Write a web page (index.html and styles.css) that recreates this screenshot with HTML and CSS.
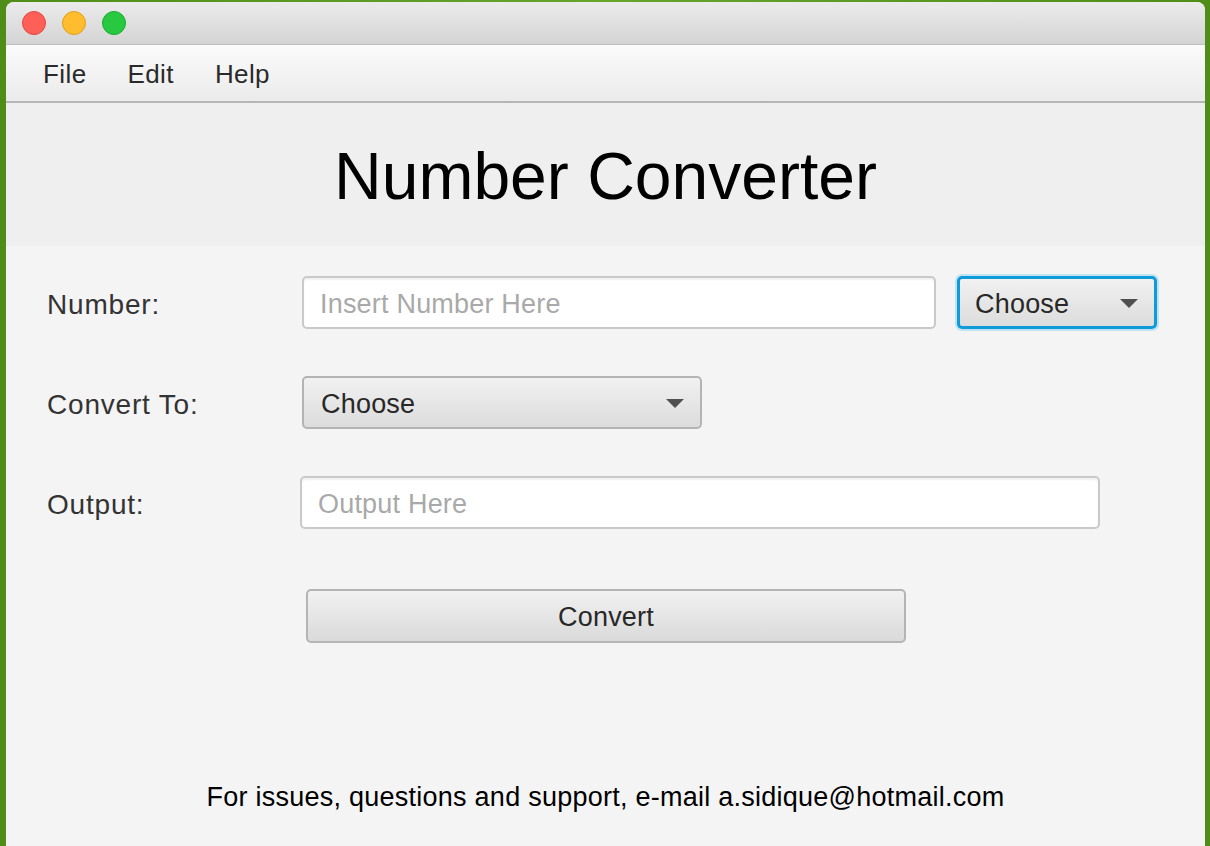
FILE: index.html
```html
<!DOCTYPE html>
<html>
<head>
<meta charset="utf-8">
<link rel="stylesheet" href="styles.css">
</head>
<body>
<div class="window">
  <div class="titlebar">
    <span class="light red"></span>
    <span class="light yellow"></span>
    <span class="light green"></span>
  </div>
  <div class="menubar">
    <span class="menu">File</span>
    <span class="menu">Edit</span>
    <span class="menu">Help</span>
  </div>
  <div class="header">
    <h1 class="title">Number Converter</h1>
  </div>
  <div class="content">
    <div class="row">
      <span class="label">Number:</span>
      <div class="field field-number"><span class="placeholder">Insert Number Here</span></div>
      <div class="combo combo-small focused"><span>Choose</span><span class="arrow"></span></div>
    </div>
    <div class="row">
      <span class="label">Convert To:</span>
      <div class="combo combo-wide"><span>Choose</span><span class="arrow"></span></div>
    </div>
    <div class="row">
      <span class="label">Output:</span>
      <div class="field field-output"><span class="placeholder">Output Here</span></div>
    </div>
    <div class="row row-button">
      <div class="button">Convert</div>
    </div>
    <div class="footer">For issues, questions and support, e-mail a.sidique@hotmail.com</div>
  </div>
</div>
</body>
</html>
```

FILE: styles.css
```css
html, body {
  margin: 0;
  padding: 0;
  height: 100%;
}
body {
  background: linear-gradient(90deg, #4f8d18 0%, #66a52a 50%, #4f8d18 100%);
  font-family: "Liberation Sans", Arial, sans-serif;
  overflow: hidden;
}
.window {
  margin: 2px 0 0 6px;
  width: 1199px;
  height: 844px;
  background: #f4f4f4;
  border-radius: 8px 8px 0 0;
  overflow: hidden;
  display: flex;
  flex-direction: column;
}
.titlebar {
  height: 43px;
  box-sizing: border-box;
  background: linear-gradient(#ebebeb, #d4d4d4);
  border-bottom: 1px solid #bdbdbd;
  display: flex;
  align-items: center;
  padding: 0 0 0 16px;
  gap: 16px;
}
.light {
  width: 24px;
  height: 24px;
  border-radius: 50%;
  box-sizing: border-box;
}
.red { background: #fe5f57; border: 1px solid #e2463f; }
.yellow { background: #febc2e; border: 1px solid #e1a116; }
.green { background: #28c840; border: 1px solid #14ae2a; }
.menubar {
  height: 58px;
  box-sizing: border-box;
  background: linear-gradient(#fbfbfb, #ebebeb);
  border-bottom: 2px solid #b6b6b6;
  display: flex;
  align-items: center;
  padding: 3px 0 0 37px;
  gap: 41px;
  font-size: 26px;
  letter-spacing: 0.4px;
  color: #2a2a2a;
}
.header {
  height: 143px;
  background: #efefef;
  display: flex;
  align-items: center;
  justify-content: center;
}
.title {
  margin: 3px 0 0 0;
  font-weight: normal;
  font-size: 66px;
  color: #000;
}
.content {
  flex: 1;
  display: flex;
  flex-direction: column;
  padding: 30px 0 0 41px;
  font-size: 27px;
  color: #333;
}
.row {
  display: flex;
  align-items: center;
  height: 53px;
  margin-bottom: 47px;
}
.label {
  width: 255px;
  flex: none;
  font-size: 28px;
  letter-spacing: 0.8px;
  padding-top: 4px;
}
.field {
  height: 53px;
  box-sizing: border-box;
  background: #fff;
  border: 2px solid #c9c9c9;
  border-radius: 5px;
  display: flex;
  align-items: center;
  padding: 4px 0 0 16px;
  box-shadow: inset 0 2px 2px rgba(0,0,0,0.06);
}
.placeholder { color: #a9a9a9; letter-spacing: 0.2px; }
.field-number { width: 634px; }
.field-output { width: 800px; margin-left: -2px; }
.combo {
  height: 53px;
  box-sizing: border-box;
  border: 2px solid #b4b4b4;
  border-radius: 5px;
  background: linear-gradient(#f1f1f1, #dcdcdc);
  display: flex;
  align-items: center;
  justify-content: space-between;
  padding: 4px 16px 0 17px;
  color: #282828;
  letter-spacing: 0.2px;
}
.combo-small {
  width: 200px;
  margin-left: 21px;
}
.combo-small.focused {
  border: 3px solid #0f9ad8;
  box-shadow: 0 0 0 2px #bfe3f3;
  padding-left: 15px;
}
.combo-wide { width: 400px; height: 53px; }
.arrow {
  width: 0;
  height: 0;
  border-left: 9px solid transparent;
  border-right: 9px solid transparent;
  border-top: 9px solid #505050;
  margin-top: -2px;
}
.row-button {
  margin-top: 13px;
}
.button {
  margin-left: 259px;
  width: 600px;
  height: 54px;
  box-sizing: border-box;
  border: 2px solid #b4b4b4;
  border-radius: 5px;
  background: linear-gradient(#f1f1f1, #dadada);
  display: flex;
  align-items: center;
  justify-content: center;
  padding-top: 4px;
  color: #282828;
  letter-spacing: 0.2px;
}
.footer {
  margin: 93px 0 0 -41px;
  text-align: center;
  color: #000;
  font-size: 27px;
  letter-spacing: 0.25px;
}
```
